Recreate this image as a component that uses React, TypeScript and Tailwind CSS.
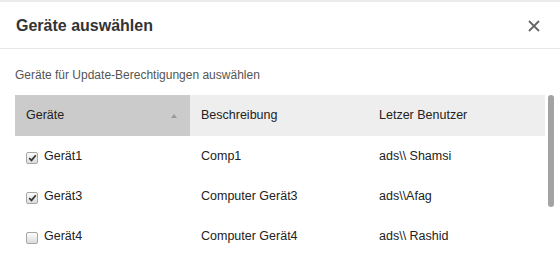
import React from 'react'

interface Device {
  name: string
  description: string
  lastUser: string
  checked: boolean
}

const devices: Device[] = [
  { name: 'Gerät1', description: 'Comp1', lastUser: 'ads\\\\ Shamsi', checked: true },
  { name: 'Gerät3', description: 'Computer Gerät3', lastUser: 'ads\\\\Afag', checked: true },
  { name: 'Gerät4', description: 'Computer Gerät4', lastUser: 'ads\\\\ Rashid', checked: false },
]

function Checkbox({ checked }: { checked: boolean }) {
  return (
    <span className="flex items-center justify-center w-[12px] h-[12px] rounded-[2px] border border-[#a6a6a6] bg-gradient-to-b from-[#fcfcfc] to-[#dcdcdc]">
      {checked && (
        <svg width="9" height="8" viewBox="0 0 9 8">
          <path d="M1.2 4.2 L3.5 6.4 L7.8 1.2" fill="none" stroke="#3a3a3a" strokeWidth="1.8" />
        </svg>
      )}
    </span>
  )
}

export default function App() {
  return (
    <div
      className="w-[560px] h-[255px] bg-white overflow-hidden border-t-2 border-[#ebebeb] text-[#333]"
      style={{ fontFamily: '"Liberation Sans", Arial, sans-serif' }}
    >
      <div className="h-[47px] flex items-center justify-between pl-4 pr-[20px] border-b border-[#e6e6e6]">
        <h1 className="text-[16px] font-bold text-[#333] pt-[2px]">Geräte auswählen</h1>
        <svg width="12" height="12" viewBox="0 0 12 12" className="mt-[2px]">
          <path d="M1 1 L11 11 M11 1 L1 11" stroke="#666" strokeWidth="1.8" />
        </svg>
      </div>

      <div className="pl-[15px]">
        <p className="pt-[18px] text-[12px] leading-[16px] text-[#555]">
          Geräte für Update-Berechtigungen auswählen
        </p>

        <div className="flex mt-[12px]">
          <div className="w-[530px] text-[12.5px] text-[#222]">
            <div className="flex h-[41px] items-center">
              <div className="w-[175px] h-full bg-[#cbcbcb] flex items-center justify-between pl-[11px] pr-[13px]">
                <span>Geräte</span>
                <span className="w-0 h-0 border-l-[3px] border-r-[3px] border-b-[4px] border-l-transparent border-r-transparent border-b-[#999]" />
              </div>
              <div className="flex-1 h-full bg-[#eeeeee] flex items-center">
                <div className="w-[178px] pl-[11px]">Beschreibung</div>
                <div className="pl-[11px]">Letzer Benutzer</div>
              </div>
            </div>

            {devices.map((d) => (
              <div key={d.name} className="flex h-[40px] items-center">
                <div className="w-[175px] flex items-center pl-[11px] gap-[6px]">
                  <span className="pt-[3px]">
                    <Checkbox checked={d.checked} />
                  </span>
                  <span>{d.name}</span>
                </div>
                <div className="w-[178px] pl-[11px]">{d.description}</div>
                <div className="pl-[11px]">{d.lastUser}</div>
              </div>
            ))}
          </div>

          <div className="ml-[3px] w-[6px] h-[112px] rounded-full bg-[#a3a3a3]" />
        </div>
      </div>
    </div>
  )
}
